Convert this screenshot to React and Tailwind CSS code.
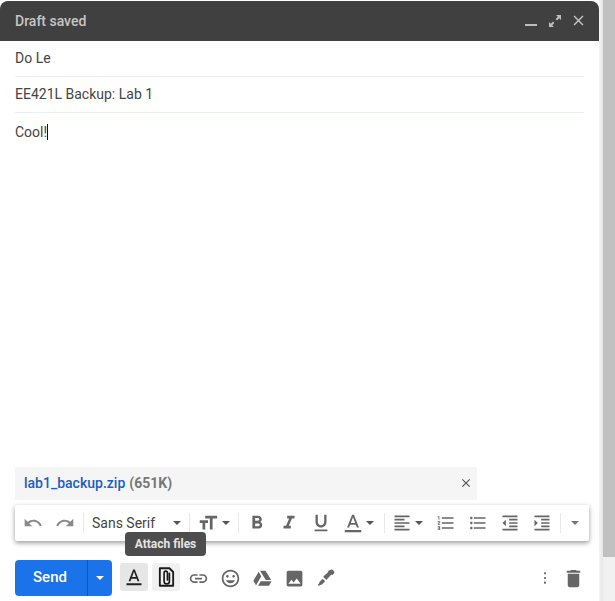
import React from 'react';

const paths = {
  undo: 'M12.5 8c-2.65 0-5.05.99-6.9 2.6L2 7v9h9l-3.62-3.62c1.39-1.16 3.16-1.88 5.12-1.88 3.54 0 6.55 2.31 7.6 5.5l2.37-.78C21.08 11.03 17.15 8 12.5 8z',
  redo: 'M18.4 10.6C16.55 8.99 14.15 8 11.5 8c-4.65 0-8.58 3.03-9.96 7.22L3.9 16c1.05-3.19 4.05-5.5 7.6-5.5 1.95 0 3.73.72 5.12 1.88L13 16h9V7l-3.6 3.6z',
  size: 'M9 4v3h5v12h3V7h5V4H9zm-6 8h3v7h3v-7h3V9H3v3z',
  bold: 'M15.6 10.79c.97-.67 1.65-1.77 1.65-2.79 0-2.26-1.75-4-4-4H7v14h7.04c2.09 0 3.71-1.7 3.71-3.79 0-1.52-.86-2.82-2.15-3.42zM10 6.5h3c.83 0 1.5.67 1.5 1.5s-.67 1.5-1.5 1.5h-3v-3zm3.5 9H10v-3h3.5c.83 0 1.5.67 1.5 1.5s-.67 1.5-1.5 1.5z',
  italic: 'M10 4v3h2.21l-3.42 8H6v3h8v-3h-2.21l3.42-8H18V4z',
  underline: 'M12 17c3.31 0 6-2.69 6-6V3h-2.5v8c0 1.93-1.57 3.5-3.5 3.5S8.5 12.93 8.5 11V3H6v8c0 3.31 2.69 6 6 6zm-7 2v2h14v-2H5z',
  color: 'M11 3L5.5 17h2.25l1.12-3h6.25l1.12 3h2.25L13 3h-2zm-1.38 9L12 5.67 14.38 12H9.62zM3 19.5h18V22H3z',
  align: 'M15 15H3v2h12v-2zm0-8H3v2h12V7zM3 13h18v-2H3v2zm0 8h18v-2H3v2zM3 3v2h18V3H3z',
  ol: 'M2 17h2v.5H3v1h1v.5H2v1h3v-4H2v1zm1-9h1V4H2v1h1v3zm-1 3h1.8L2 13.1v.9h3v-1H3.2L5 10.9V10H2v1zm5-6v2h14V5H7zm0 14h14v-2H7v2zm0-6h14v-2H7v2z',
  ul: 'M4 10.5c-.83 0-1.5.67-1.5 1.5s.67 1.5 1.5 1.5 1.5-.67 1.5-1.5-.67-1.5-1.5-1.5zm0-6c-.83 0-1.5.67-1.5 1.5S3.17 7.5 4 7.5 5.5 6.83 5.5 6 4.83 4.5 4 4.5zm0 12c-.83 0-1.5.68-1.5 1.5s.68 1.5 1.5 1.5 1.5-.68 1.5-1.5-.67-1.5-1.5-1.5zM7 19h14v-2H7v2zm0-6h14v-2H7v2zm0-8v2h14V5H7z',
  outdent: 'M11 17h10v-2H11v2zm-8-5l4 4V8l-4 4zm0 9h18v-2H3v2zM3 3v2h18V3H3zm8 6h10V7H11v2zm0 4h10v-2H11v2z',
  indent: 'M3 21h18v-2H3v2zM3 8v8l4-4-4-4zm8 9h10v-2H11v2zM3 3v2h18V3H3zm8 6h10V7H11v2zm0 4h10v-2H11v2z',
  link: 'M3.9 12c0-1.71 1.39-3.1 3.1-3.1h4V7H7c-2.76 0-5 2.24-5 5s2.24 5 5 5h4v-1.9H7c-1.71 0-3.1-1.39-3.1-3.1zM8 13h8v-2H8v2zm9-6h-4v1.9h4c1.71 0 3.1 1.39 3.1 3.1s-1.39 3.1-3.1 3.1h-4V17h4c2.76 0 5-2.24 5-5s-2.24-5-5-5z',
  smile: 'M11.99 2C6.47 2 2 6.48 2 12s4.47 10 9.99 10C17.52 22 22 17.52 22 12S17.52 2 11.99 2zM12 20c-4.42 0-8-3.58-8-8s3.58-8 8-8 8 3.58 8 8-3.58 8-8 8zm3.5-9c.83 0 1.5-.67 1.5-1.5S16.33 8 15.5 8 14 8.67 14 9.5s.67 1.5 1.5 1.5zm-7 0c.83 0 1.5-.67 1.5-1.5S9.33 8 8.5 8 7 8.67 7 9.5 7.67 11 8.5 11zm3.5 6.5c2.33 0 4.31-1.46 5.11-3.5H6.89c.8 2.04 2.78 3.5 5.11 3.5z',
  drive: 'M7.6 4.2L1.6 14.6l3 5.2 6-10.4-3-5.2zM9.9 15l-3 5.2h12.5l3-5.2H9.9zM21.9 13.6L15.4 3H9.2l6.5 10.6h6.2z',
  image: 'M21 19V5c0-1.1-.9-2-2-2H5c-1.1 0-2 .9-2 2v14c0 1.1.9 2 2 2h14c1.1 0 2-.9 2-2zM8.5 13.5l2.5 3.01L14.5 12l4.5 6H5l3.5-4.5z',
  pen: 'M16.6 2.8l1.7-.9c.5-.3 1.1-.2 1.5.2l1.9 1.9c.4.4.5 1 .2 1.5l-.9 1.7-1.6 1.6-.9-.9-6.2 6.4-3.7-3.7 6.4-6.2-.9-.9 2.5-.7zM8 12.9l3 3-3.8 3.8-2.3.7-1.2 1.3-1.5-1.5 1.3-1.2.7-2.3L8 12.9z',
  dots: 'M12 7.2c.8 0 1.4-.6 1.4-1.4s-.6-1.4-1.4-1.4-1.4.6-1.4 1.4.6 1.4 1.4 1.4zm0 3.4c-.8 0-1.4.6-1.4 1.4s.6 1.4 1.4 1.4 1.4-.6 1.4-1.4-.6-1.4-1.4-1.4zm0 6.2c-.8 0-1.4.6-1.4 1.4s.6 1.4 1.4 1.4 1.4-.6 1.4-1.4-.6-1.4-1.4-1.4z',
  trash: 'M6 19c0 1.1.9 2 2 2h8c1.1 0 2-.9 2-2V7H6v12zM19 4h-3.5l-1-1h-5l-1 1H5v2h14V4z',
  close: 'M19 6.41L17.59 5 12 10.59 6.41 5 5 6.41 10.59 12 5 17.59 6.41 19 12 13.41 17.59 19 19 17.59 13.41 12z',
};

function Icon({ name, className = 'w-5 h-5 text-[#666]' }) {
  return (
    <svg viewBox="0 0 24 24" fill="currentColor" className={className}>
      <path d={paths[name]} />
    </svg>
  );
}

function Caret({ className = 'text-[#666]' }) {
  return (
    <svg viewBox="0 0 10 5" fill="currentColor" className={`w-2 h-1 shrink-0 ${className}`}>
      <path d="M0 0h10L5 5z" />
    </svg>
  );
}

function ToolBtn({ name, className }) {
  return (
    <div className="w-8 h-full flex items-center justify-center shrink-0">
      <Icon name={name} className={className} />
    </div>
  );
}

function Divider() {
  return <div className="w-px h-5 bg-[#e8e8e8] mx-0.5 shrink-0" />;
}

function Toolbar() {
  return (
    <div className="relative mx-[15px] w-[574px] h-9 mt-[5px] bg-white rounded-[2px] shadow-[0_2px_5px_rgba(0,0,0,0.4)] flex items-center pl-0.5">
      <ToolBtn name="undo" className="w-5 h-5 text-[#8a8a8a]" />
      <ToolBtn name="redo" className="w-5 h-5 text-[#8a8a8a]" />
      <Divider />
      <div className="w-[101px] h-full flex items-center pl-[6px] pb-px text-sm text-[#444]">
        <span>Sans Serif</span>
        <Caret className="ml-auto mr-[6px] text-[#555]" />
      </div>
      <Divider />
      <div className="w-11 h-full flex items-center shrink-0 pl-[5px]">
        <Icon name="size" className="w-[22px] h-[22px] text-[#666]" />
        <Caret className="ml-[3px] text-[#555]" />
      </div>
      <Divider />
      <ToolBtn name="bold" className="w-[22px] h-[22px] text-[#666]" />
      <ToolBtn name="italic" className="w-[22px] h-[22px] text-[#666]" />
      <ToolBtn name="underline" className="w-[22px] h-[22px] text-[#666]" />
      <div className="w-[45px] h-full flex items-center shrink-0">
        <ToolBtn name="color" className="w-[22px] h-[22px] text-[#666]" />
        <Caret className="-ml-[3px] text-[#555]" />
      </div>
      <Divider />
      <div className="w-[43px] h-full flex items-center shrink-0 pl-[5px]">
        <Icon name="align" />
        <Caret className="ml-[3px] text-[#555]" />
      </div>
      <ToolBtn name="ol" className="w-5 h-5 text-[#666]" />
      <ToolBtn name="ul" className="w-5 h-5 text-[#666]" />
      <ToolBtn name="outdent" className="w-5 h-5 text-[#666]" />
      <ToolBtn name="indent" className="w-5 h-5 text-[#666]" />
      <Divider />
      <div className="w-6 h-full flex items-center justify-center">
        <Caret className="text-[#777]" />
      </div>
      <div className="absolute left-[110px] top-[27px] w-[81px] h-6 rounded bg-[#4d4d4d] text-[#e4e4e4] text-xs font-bold flex items-center justify-center">
        Attach files
      </div>
    </div>
  );
}

function Paperclip() {
  return (
    <svg viewBox="0 0 20 24" fill="none" stroke="#1a1a1a" className="w-[17px] h-[20px]">
      <path d="M2 1.5h11.5l4.5 4.5V22.5H2z" strokeWidth="2.2" strokeLinejoin="round" />
      <path d="M13.5 7.5v9.5a3.2 3.2 0 0 1-6.4 0V7a2 2 0 0 1 4 0V15.5" strokeWidth="2" strokeLinecap="round" />
    </svg>
  );
}

export default function App() {
  return (
    <div className="w-[615px] h-[601px] flex overflow-hidden bg-white font-['Roboto',sans-serif] text-sm text-[#444]">
      <div className="w-[599px] h-full flex flex-col pt-px">
        <div className="h-10 shrink-0 bg-[#404040] rounded-t-lg flex items-center pl-[15px] pr-3 pb-px">
          <span className="text-sm font-medium text-[#c6c6c6]">Draft saved</span>
          <div className="ml-auto flex items-center text-[#bdbdbd]">
            <div className="w-3 h-[2px] bg-[#bdbdbd] mt-[9px]" />
            <svg viewBox="0 0 12 12" fill="currentColor" className="w-3 h-3 ml-3">
              <path d="M7 0h5v5l-1.8-1.8L8 5.4 6.6 4l2.2-2.2zM5 12H0V7l1.8 1.8L4 6.6 5.4 8l-2.2 2.2z" />
            </svg>
            <Icon name="close" className="w-[17px] h-[17px] ml-[9px] text-[#c4c4c4]" />
          </div>
        </div>

        <div className="mx-[15px] w-[569px] h-9 shrink-0 flex items-center pb-[2px] border-b border-[#eceff1]">Do Le</div>
        <div className="mx-[15px] w-[569px] h-9 shrink-0 flex items-center pb-[2px] border-b border-[#eceff1]">EE421L Backup: Lab 1</div>

        <div className="flex-1 px-[15px] pt-[9px] leading-5">
          <span className="border-r border-[#111] pr-0">Cool!</span>
        </div>

        <div className="mx-[15px] w-[462px] h-[33px] bg-[#f5f5f5] flex items-center pl-[9px] pr-1 pb-[2px] font-medium shrink-0">
          <span className="text-[#1a5fc4]">lab1_backup.zip</span>
          <span className="ml-1 text-[#777] font-bold">(651K)</span>
          <Icon name="close" className="ml-auto w-[14px] h-[14px] text-[#555]" />
        </div>

        <Toolbar />

        <div className="h-[60px] pt-[19px] pb-[5px] shrink-0 flex items-start pl-[15px] pr-3">
          <div className="w-[97px] h-9 rounded bg-[#1a73e8] text-white flex">
            <div className="w-[72px] h-full flex items-center justify-center pr-[2px] text-[15px] font-medium">Send</div>
            <div className="flex-1 h-full border-l border-[#1557b0] flex items-center justify-center">
              <Caret className="text-white" />
            </div>
          </div>
          <div className="ml-2 mt-[3px] w-7 h-7 rounded-[3px] bg-[#e6e6e6] flex items-center justify-center">
            <svg viewBox="0 0 24 24" className="w-[20px] h-[20px]" fill="#222">
              <path d={paths.color} />
            </svg>
          </div>
          <div className="ml-1 mt-[3px] w-7 h-7 rounded-[3px] bg-[#f1f1f1] flex items-center justify-center">
            <Paperclip />
          </div>
          <div className="ml-0.5 flex h-9 items-center">
            <ToolBtn name="link" className="w-[21px] h-[21px] text-[#666]" />
            <ToolBtn name="smile" className="w-[21px] h-[21px] text-[#666]" />
            <ToolBtn name="drive" className="w-[21px] h-[21px] text-[#666]" />
            <ToolBtn name="image" className="w-[21px] h-[21px] text-[#666]" />
            <ToolBtn name="pen" className="w-5 h-5 text-[#666]" />
          </div>
          <div className="ml-auto flex h-9 items-center">
            <div className="w-7 flex justify-center"><Icon name="dots" className="w-[18px] h-[18px] text-[#666]" /></div>
            <div className="w-7 flex justify-center"><Icon name="trash" className="w-[23px] h-[23px] text-[#666]" /></div>
          </div>
        </div>
      </div>

      <div className="w-1 h-full bg-gradient-to-r from-[#f4f4f4] to-[#e6e6e6]" />
      <div className="w-3 h-full bg-[#f1f1f1] flex flex-col">
        <div className="h-[557px] bg-[#c1c1c1]" />
      </div>
    </div>
  );
}
